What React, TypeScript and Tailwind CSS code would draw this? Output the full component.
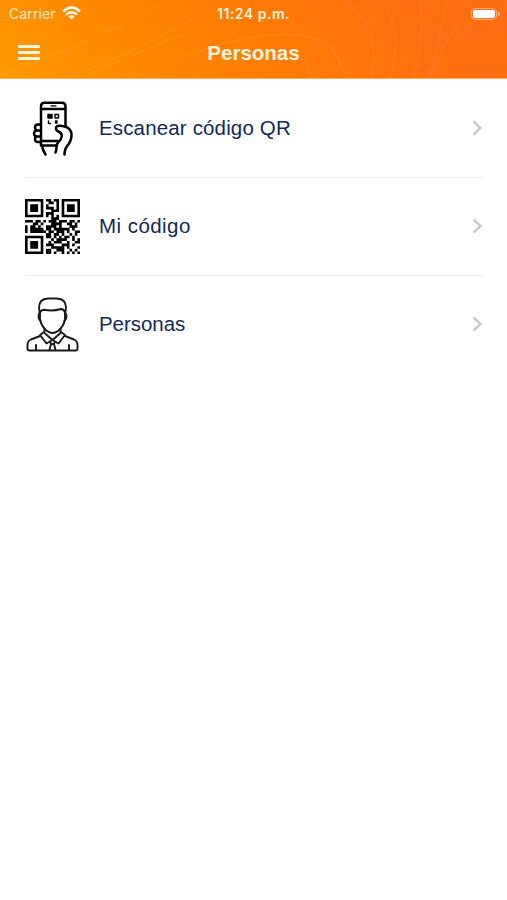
import React from "react";

const qrRows = [
  "111111101101101111111",
  "100000100110101000001",
  "101110101000101011101",
  "101110101110101011101",
  "101110100011101011101",
  "100000101110001000001",
  "111111101010101111111",
  "000000000011100000000",
  "111011010111011101101",
  "000110100011110011010",
  "101101001111010001110",
  "101111101101111110100",
  "101111110110111010011",
  "000000001101101001010",
  "111111101101010110100",
  "100000100010111100101",
  "101110100101110010011",
  "101110101110001110100",
  "101110100011111010001",
  "100000101100111001010",
  "111111101101001010101",
];

const qrPath = qrRows
  .flatMap((row, y) => row.split("").map((cell, x) => (cell === "1" ? `M${x} ${y}h1v1h-1z` : "")))
  .join("");

function QrIcon() {
  return (
    <svg className="h-[55px] w-[55px]" viewBox="0 0 21 21">
      <path d={qrPath} fill="#000" />
    </svg>
  );
}

function PhoneIcon() {
  return (
    <svg className="h-[55px] w-[55px]" viewBox="0 0 55 55" fill="none" stroke="#000" strokeWidth="2.5" strokeLinejoin="round" strokeLinecap="round">
      <path d="M16 44.500V5.500Q16 1.800 19.500 1.800H37Q40.500 1.800 40.500 5.500V26M16 8H40.500M16 40H33M16 44.500H32" />
      <path d="M26 4.800h5" strokeWidth="1.300" />
      <path d="M15.500 23.500H13Q10 23.500 10 26.500Q10 29.500 13 29.500H15.500M12.500 29.500Q9 29.500 9 32.500Q9 35.500 12.500 35.500H15.500M12.500 35.500Q10 35.500 10 38.200Q10 41 13 41H15.500M17 44.500Q17.500 49 20.500 53.500" />
      <path d="M40.500 25.500Q46.500 28 46.500 34Q46.500 40 42.500 44.500Q39.500 48 39.500 53.500M40.500 25.500L35 24.700Q31 24.500 31 27.500Q31 29.500 33.500 30.500Q37 32 36.800 35Q36.500 38.500 33.500 41Q31.500 43 31.500 46Q31.500 49 30.500 51.500" />
      <path d="M30 13.500h3.500v3.500h-3.500zM23.500 20v2.500h2M30.500 20h1.500v2h-1.500z" strokeWidth="1.400" />
      <path d="M23 13.500h4v3.500h-4z" fill="#000" strokeWidth="1.500" />
    </svg>
  );
}

function PersonIcon() {
  return (
    <svg className="h-[55px] w-[55px]" viewBox="0 0 55 55" fill="none" stroke="#1a1a1a" strokeWidth="1.900" strokeLinejoin="round" strokeLinecap="round">
      <path d="M14.800 17L14 10.500Q14 2 23 1.500H32Q41 2 41 10.500L40.200 17M15 17Q15 13 19 12.800Q28 14.500 36 12Q40 12.500 40 17V22Q39 29 33 34Q27.500 38 22 34Q16 29 15 22V17Z" />
      <path d="M14.800 16Q12.800 18 14 22L15.500 24M40.200 16Q42.200 18 41 22L39.500 24M19.500 32V36L27.500 43L35.500 36V32" />
      <path d="M19 35L15 38L21.500 46.500L27.500 43L33.500 46.500L40 38L36 35M15 39L6 42.500Q2.500 44 2.500 48V51.500Q2.500 53.500 4.500 53.500H50.500Q52.500 53.500 52.500 51.500V48Q52.500 44 49 42.500L40 39M25 44.500L26 47L24.500 53M30 44.500L29 47L30.500 53M26 47H29M11 48V53M44 48V53" />
    </svg>
  );
}

function Chevron() {
  return (
    <svg className="-mr-px h-4 w-[11px]" viewBox="0 0 11 16" fill="none" stroke="#c9cacd" strokeWidth="2.4">
      <path d="M1.500 1.500L8.500 8L1.500 14.500" />
    </svg>
  );
}

function HeaderLines() {
  return (
    <svg className="pointer-events-none absolute inset-0 h-full w-full" viewBox="0 0 507 79" preserveAspectRatio="none" fill="none" stroke="#ffc17a" strokeOpacity="0.28" strokeWidth="0.8">
      <path d="M0 76Q88 45 170 0M72 77Q137 51 194 18M85 77Q150 48 204 26M170 64C220 40 305 20 332 50Q339 58 341 66L347 79" />
      <path d="M341 0C370 16 378 42 371 79M381 0C401 24 395 52 391 79M421 0Q424 46 413 79M447 0Q437 47 429 79M459 25Q438 49 433 79M292 51Q308 61 313 79" />
    </svg>
  );
}

interface MenuRowProps {
  label: string;
  icon: React.ReactNode;
  tracking: string;
  last?: boolean;
}

function MenuRow({ label, icon, tracking, last }: MenuRowProps) {
  return (
    <li className={`flex h-[98px] items-center border-b ${last ? "border-transparent" : "border-[#ececee]"}`}>
      {icon}
      <span className={`ml-[19px] flex-1 text-[20.5px] leading-6 text-[#11295a] ${tracking}`}>{label}</span>
      <Chevron />
    </li>
  );
}

export default function App() {
  return (
    <main className="h-[900px] w-full overflow-hidden bg-white font-['Liberation_Sans',sans-serif]">
      <header className="relative h-[79px] border-b border-[#ffac58] bg-[linear-gradient(50deg,#ff9a00_0%,#ff8900_24%,#ff7b04_52%,#ff7010_76%,#ff6d14_100%)] text-[#fff5df]">
        <HeaderLines />
        <div className="relative grid h-[27px] grid-cols-[1fr_auto_1fr] items-center font-['Inter',sans-serif] text-[14px]">
          <div className="flex items-center gap-[6px] pl-[9px]">
            <span className="tracking-[0.1px] text-[#ffe8c4]">Carrier</span>
            <svg className="-mt-px h-[14px] w-[19px]" viewBox="0 0 19 14" fill="none" stroke="#fffaf0" strokeWidth="2.500">
              <path d="M1 5.500Q9.500-2.500 18 5.500M4 8.700Q9.500 3.700 15 8.700" />
              <path d="M6.500 10.500Q9.500 8 12.500 10.500L9.500 13.500Z" fill="#fffaf0" stroke="none" />
            </svg>
          </div>
          <span className="font-semibold tracking-[0.5px]">11:24 p.m.</span>
          <div className="mr-[7px] flex items-center justify-self-end">
            <div className="h-[12px] w-[26px] rounded-[4px] border border-[#ffb27c] p-[1px]">
              <div className="h-full rounded-[2px] bg-white" />
            </div>
            <div className="ml-px h-1 w-[2px] rounded-r-sm bg-[#ffb27c]" />
          </div>
        </div>
        <div className="relative grid h-[51px] grid-cols-[1fr_auto_1fr] items-center">
          <button aria-label="Menú" className="ml-[18px] flex w-[22px] flex-col gap-[3.5px]">
            <span className="h-[2.5px] bg-current" />
            <span className="h-[2.5px] bg-current" />
            <span className="h-[2.5px] bg-current" />
          </button>
          <h1 className="text-[20.5px] font-bold leading-6">Personas</h1>
        </div>
      </header>
      <ul className="px-[25px] pt-[0.5px]">
        <MenuRow label="Escanear código QR" tracking="tracking-[0.15px]" icon={<PhoneIcon />} />
        <MenuRow label="Mi código" tracking="tracking-[0.45px]" icon={<QrIcon />} />
        <MenuRow label="Personas" tracking="tracking-[-0.05px]" icon={<PersonIcon />} last />
      </ul>
    </main>
  );
}
